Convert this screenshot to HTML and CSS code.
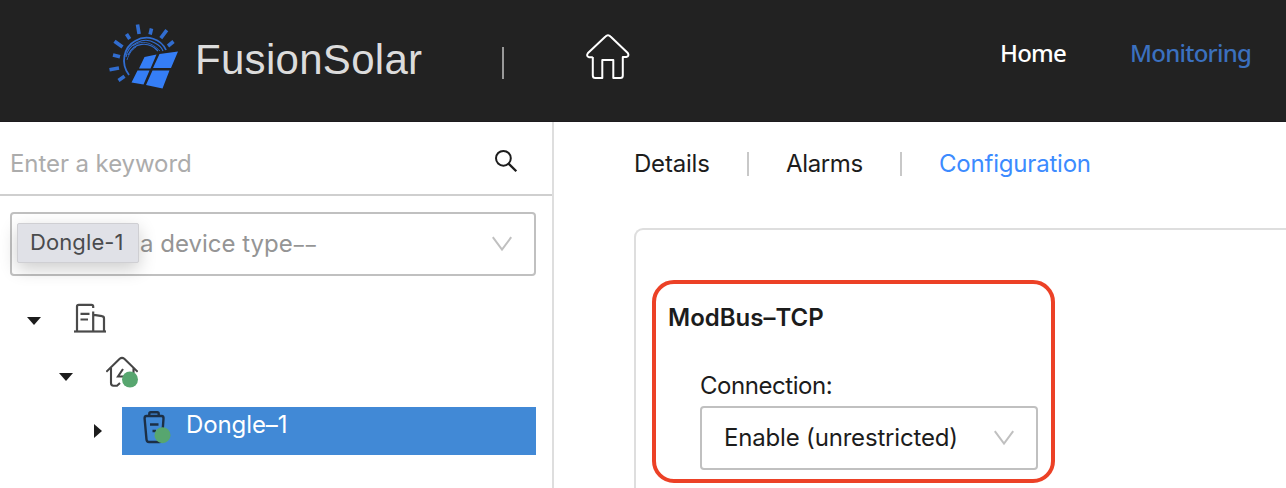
FILE: index.html
```html
<!DOCTYPE html>
<html lang="en">
<head>
<meta charset="utf-8">
<title>FusionSolar</title>
<link rel="stylesheet" href="styles.css">
</head>
<body>
<header class="topbar">
  <svg class="logo" width="70" height="66" viewBox="0 0 70 66">
    <g stroke="#316dd0" stroke-width="3.6" fill="none">
      <path d="M29.500 0.500l1.600 9.500M43.500 4.500l-1.400 6M58.800 6.200l-6 8M65.500 17.500l-5.500 4.500M18.500 10l3.200 5M6.500 17.200l8 5.800M5 31l7 1.800M1.500 45.700l9.500-1.800M10.500 56.500l6-4.200" transform="translate(-1 0)"/>
    </g>
    <g stroke="#316dd0" fill="none">
      <path stroke-width="1.8" d="M20 51C11 39 15 23 26 17C38 10 52 15 57 26"/>
      <path stroke-width="1.200" d="M17 33C19 20 35 12 46 19C50 21 53 24 54 27M19 31C25 18 40 17 49 27"/>
      <path stroke-width=".8" d="M24 22C34 15 43 19 51 27M18 36C20 29 24 25 27 23"/>
    </g>
    <path fill="#357ef6" d="M35.500 33L47.500 30.500L41.500 44.500H30ZM50.500 30L69 27.500L62 44H44ZM28.500 46.500H40.500L34.500 60.500L22.500 58.500ZM43.500 46.500H60.500L53.500 64.500L37 61Z"/>
  </svg>
  <span class="brand">FusionSolar</span>
  <span class="brand-line"></span>
  <svg class="home-icon" width="46" height="48" viewBox="0 0 46 48" fill="none" stroke="#fff" stroke-width="2" stroke-linejoin="round">
    <path d="M7.800 24V42.500Q7.800 45 10.300 45H17.300V26.900H28.300V45H35.300Q37.800 45 37.800 42.500V24H41.200Q44.600 23.200 42.800 20L25.500 3.500Q23 1 20.500 3.500L3 20Q.8 23.200 4.200 24.300H7.800"/>
  </svg>
  <nav class="main-nav">
    <a class="nav-home">Home</a>
    <a class="nav-mon">Monitoring</a>
  </nav>
</header>
<div class="body">
  <aside class="side">
    <div class="search">
      <span class="placeholder">Enter a keyword</span>
      <svg width="26" height="26" viewBox="0 0 26 26" fill="none" stroke="#1c1c1c" stroke-width="2"><circle cx="11.400" cy="10.300" r="7.400"/><path d="M16.600 15.600L24.300 23.300" stroke-width="2.300"/></svg>
    </div>
    <div class="select device">
      <span class="device-text">a device type<span class="dashes">––</span></span>
      <svg class="chev" width="20" height="16" viewBox="0 0 20 16"><path d="M.8 1.200L10 13.500L19.200 1.200"/></svg>
      <div class="tip">Dongle-1</div>
    </div>
    <div class="tree">
      <div class="row row-1">
        <i class="down"></i>
        <svg width="32" height="32" viewBox="0 0 32 32" fill="none" stroke="#4a4a4a" stroke-width="2.200"><path d="M0 29.500H32"/><path d="M3 29V4.500Q3 2.800 4.700 2.800H17.500Q19.200 2.800 19.200 4.500V6M19.200 9.500V29M20 12.800L28 14.200Q30 14.500 30 16.500V29M6.500 11.800H15.500M6.500 17.500H14"/></svg>
      </div>
      <div class="row row-2">
        <i class="down"></i>
        <svg width="32" height="32" viewBox="0 0 32 32" fill="none" stroke="#454545" stroke-width="2.100"><path d="M.3 15.800L13.700 2.800Q16 .8 18.300 2.800L31.700 15.800M5 12V27Q5 29.700 7.500 29.800H11L14 27M27.500 12V17M17 13L12 20.500H18"/><circle cx="24" cy="23.500" r="8" fill="#57a66f" stroke="none"/></svg>
      </div>
      <div class="row row-3">
        <i class="right"></i>
        <div class="picked">
          <svg width="32" height="38" viewBox="0 0 32 38" fill="none" stroke="#1c2f45" stroke-width="2.400"><path d="M10.300 8V6.700Q10.300 5.200 11.800 5.200H18.200Q19.700 5.200 19.700 6.700V8M7.500 9H22.500Q24.700 9.200 24.500 11.500L23 32.500Q22.700 35 20.500 35H10Q7.700 35 7.500 32.500L5.600 11.500Q5.500 9.200 7.500 9ZM11 17.500H19.500M13.500 24H17"/><circle cx="23.500" cy="28.200" r="8" fill="#57a66f" stroke="none"/></svg>
          <span>Dongle–1</span>
        </div>
      </div>
    </div>
  </aside>
  <main class="main">
    <div class="tabs">
      <span class="tab t1">Details</span><i class="sep"></i>
      <span class="tab t2">Alarms</span><i class="sep"></i>
      <span class="tab t3">Configuration</span>
    </div>
    <div class="panel">
      <section class="group">
        <h2>ModBus–TCP</h2>
        <label>Connection:</label>
        <div class="select mode">
          <span>Enable (unrestricted)</span>
          <svg class="chev" width="20" height="16" viewBox="0 0 20 16"><path d="M.8 1.200L10 13.500L19.200 1.200"/></svg>
        </div>
      </section>
    </div>
  </main>
</div>
</body>
</html>
```
FILE: styles.css
```css
* { box-sizing: border-box; }
body {
  margin: 0;
  width: 1286px;
  height: 488px;
  overflow: hidden;
  background: #fff;
  color: #1c1c1c;
  font: 24px/32px Inter, "Liberation Sans", sans-serif;
}
svg { display: block; flex: none; }
.topbar {
  display: flex;
  align-items: flex-start;
  height: 122px;
  background: #222;
  border-bottom: 1px solid #1d1b1e;
}
.logo { margin: 24px 0 0 109px; }
.brand {
  width: 290px;
  margin: 36px 0 0 15px;
  padding-left: 1px;
  font: 42px/48px "Liberation Sans", sans-serif;
  letter-spacing: .3px;
  color: #dcdcdc;
  white-space: nowrap;
}
.brand-line { width: 2px; height: 32px; margin: 47px 0 0 18px; background: #999; }
.home-icon { margin: 33px 0 0 81px; }
.main-nav {
  display: flex;
  margin: 37px 0 0 369px;
  font-family: "Noto Sans", sans-serif;
  font-weight: 500;
  white-space: nowrap;
}
.nav-home { width: 130px; color: #fff; letter-spacing: -.8px; }
.nav-mon { color: #3b70bf; letter-spacing: -.75px; }

.body { display: flex; height: 366px; }
.side { width: 554px; border-right: 2px solid #dedede; }
.search {
  display: flex;
  justify-content: space-between;
  height: 74px;
  padding: 26px 34px 0 10px;
  border-bottom: 2px solid #cfcfcf;
}
.placeholder { color: #acacac; letter-spacing: -.08px; }
.select {
  display: flex;
  align-items: center;
  justify-content: space-between;
  height: 64px;
  border: 2px solid #c0c0c0;
  border-radius: 4px;
  white-space: nowrap;
}
.chev { fill: none; stroke: #c0c0c0; stroke-width: 2; }
.device { position: relative; width: 526px; margin: 16px 0 0 10px; padding: 0 22px 0 128px; }
.device-text { color: #959595; }
.dashes { margin-left: 1px; font-size: 20px; letter-spacing: 2px; }
.tip {
  position: absolute;
  left: 5px;
  top: 9px;
  width: 122px;
  height: 40px;
  padding-left: 12px;
  background: #e0e1e7;
  border: 1px solid #cfcfd3;
  border-radius: 2px;
  box-shadow: 0 6px 18px rgba(0, 0, 0, .2);
  color: #4a4b4d;
  font-size: 22px;
  line-height: 37px;
  letter-spacing: .1px;
}
.row { display: flex; align-items: flex-start; }
.row-1 { height: 56px; padding: 26px 0 0 27px; }
.row-2 { height: 56px; padding: 24px 0 0 59px; }
.row-3 { height: 66px; padding: 19px 0 0 94px; }
.down { margin: 15px 33px 0 0; border: solid transparent; border-width: 8px 7px 0; border-top-color: #1c1c1c; }
.row-2 .down { margin-top: 17px; }
.right { margin: 17px 20px 0 0; border: solid transparent; border-width: 7px 0 7px 8px; border-left-color: #1c1c1c; }
.picked { display: flex; width: 414px; height: 48px; padding-left: 17px; background: #4189d6; color: #fff; }
.picked span { margin: 2px 0 0 15px; letter-spacing: -.1px; }

.main { flex: 1; min-width: 0; padding-left: 80px; }
.tabs { display: flex; padding-top: 26px; white-space: nowrap; }
.sep { width: 2px; height: 24px; margin-top: 4px; background: #c8c8c8; }
.t1 { width: 113px; letter-spacing: -.2px; }
.t2 { width: 114px; margin: 0 0 0 37px; letter-spacing: -.35px; }
.t3 { margin-left: 37px; color: #3c8bff; letter-spacing: -.2px; }
.panel {
  height: 260px;
  margin-top: 48px;
  padding: 50px 0 0 16px;
  border: 2px solid #dedede;
  border-right: 0;
  border-bottom: 0;
  border-radius: 9px 0 0 0;
}
.group {
  width: 403px;
  height: 203px;
  padding: 18px 0 0 12px;
  border: 4px solid #ec4126;
  border-radius: 22px;
}
h2 { margin: 0; font-size: 24px; line-height: 32px; font-weight: 600; }
label { display: block; margin: 36px 0 4px 32px; letter-spacing: -.45px; }
.mode { width: 338px; margin-left: 32px; padding: 0 22px; letter-spacing: -.18px; }
```
